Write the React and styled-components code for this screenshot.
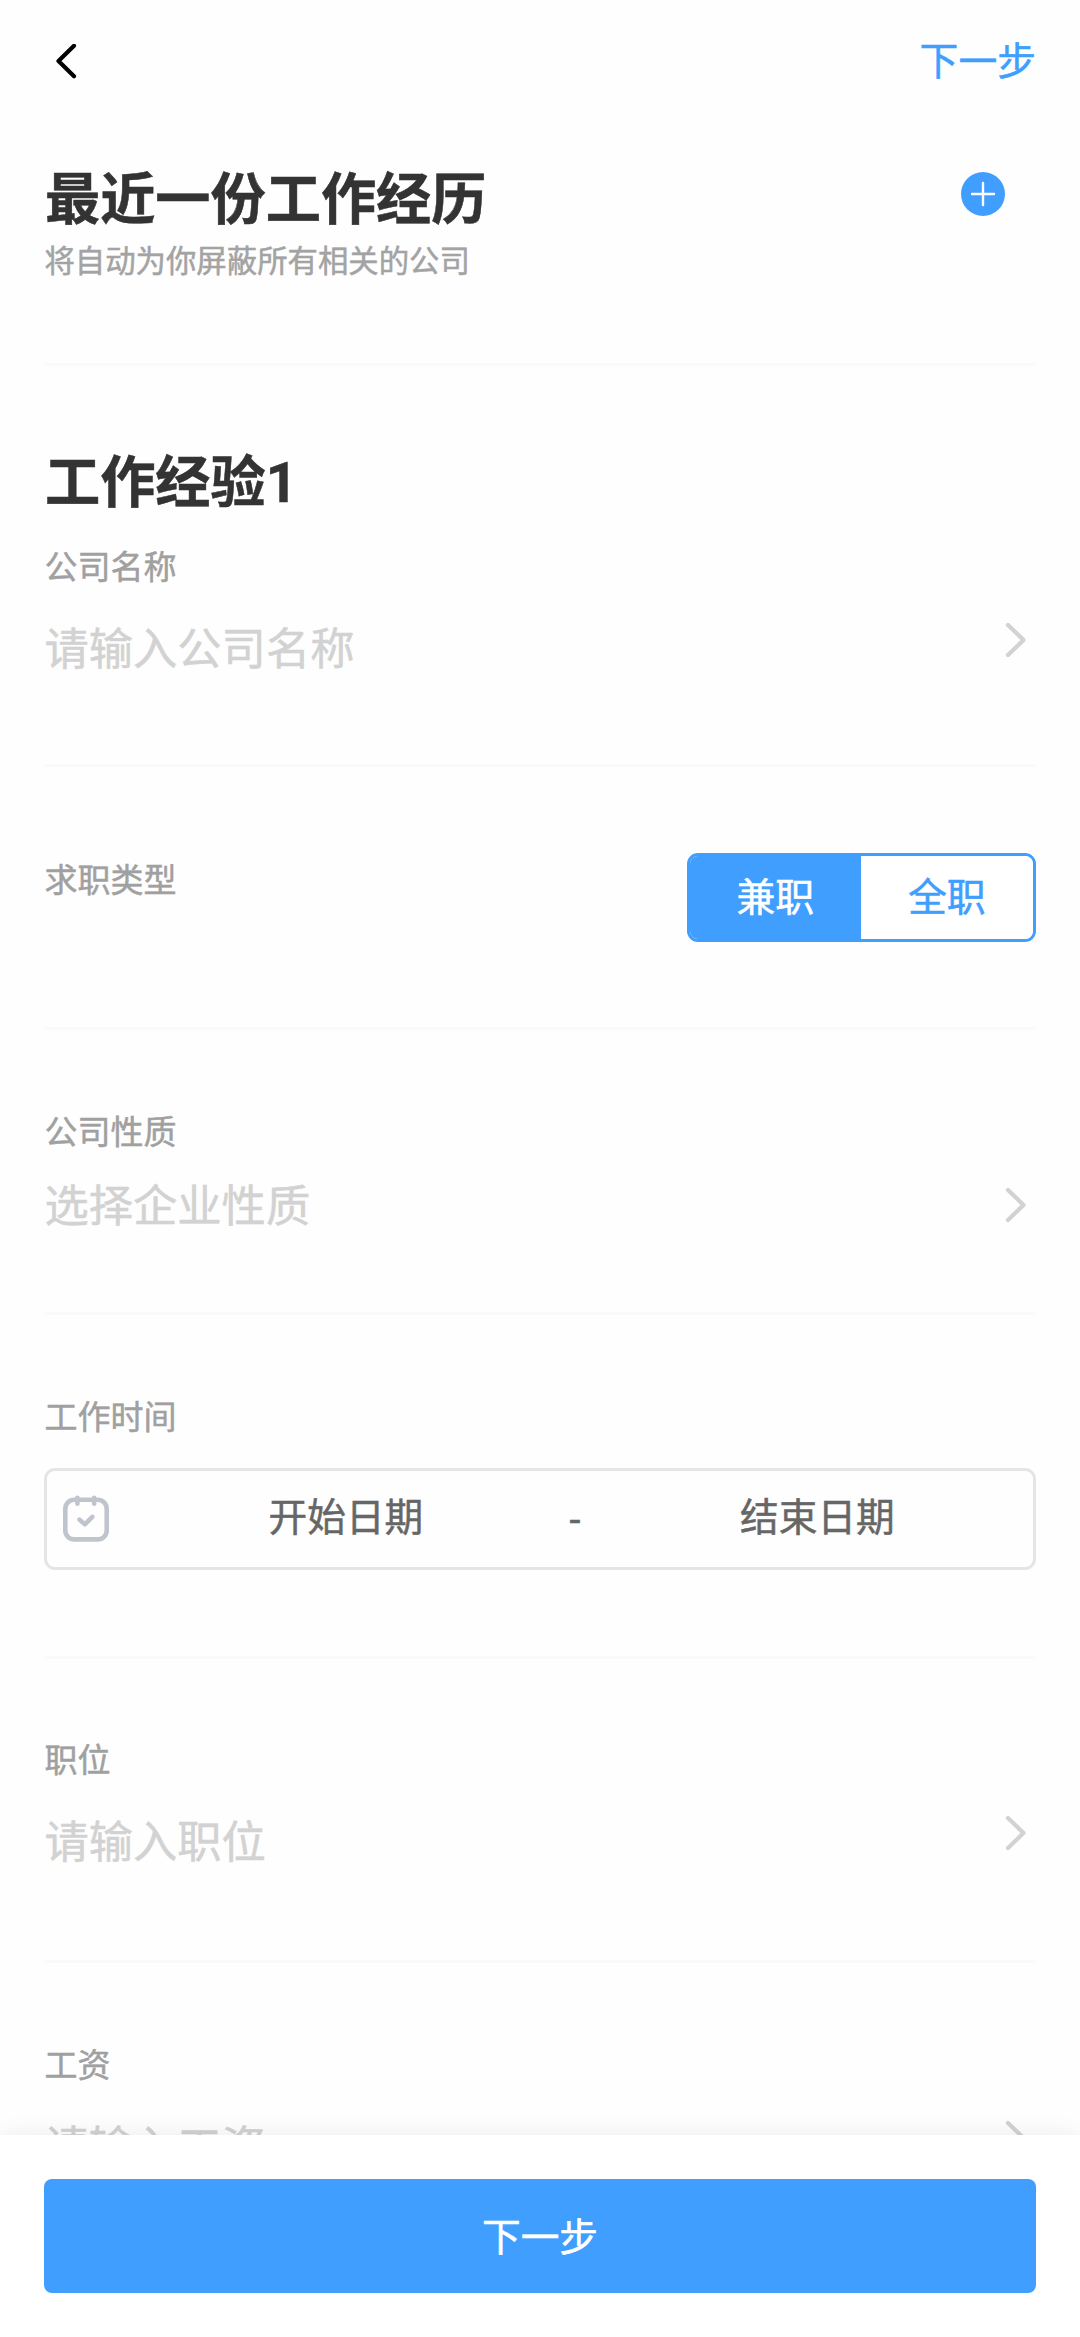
import React from "react";
import styled, { createGlobalStyle } from "styled-components";

const Global = createGlobalStyle`
  * { box-sizing: border-box; }
  html, body { margin: 0; padding: 0; background: #fefefe; }
  body { overflow: hidden; }
  button { border: 0; padding: 0; margin: 0; background: none; font: inherit; color: inherit; }
  h1, h2, p { margin: 0; }
`;

const Screen = styled.div`
  width: 1080px;
  height: 2337px;
  display: flex;
  flex-direction: column;
  background: #fefefe;
  font-family: "Liberation Sans", "Noto Sans CJK SC", sans-serif;
  -webkit-text-stroke: 0.5px currentColor;
`;

const NavBar = styled.header`
  height: 124px;
  flex: none;
  padding: 0 44px 0 54px;
  display: flex;
  align-items: center;
  justify-content: space-between;
`;

const NavAction = styled.button`
  font-size: 38.8px;
  line-height: 54px;
  color: #409eff;
`;

const Form = styled.main`
  flex: 1;
  min-height: 0;
  padding: 0 44.4px;
`;

const Section = styled.section`
  height: ${(p) => p.$height}px;
  padding-top: ${(p) => p.$top}px;
  border-bottom: 3px solid #fafafa;
`;

const Line = styled.div`
  display: flex;
  justify-content: space-between;
  align-items: flex-start;
`;

const Title = styled.h1`
  padding-left: 0.6px;
  font-family: Roboto, "Noto Sans CJK SC", sans-serif;
  font-size: 55.2px;
  line-height: 60px;
  font-weight: 700;
  color: #333;
`;

const Subtitle = styled.p`
  margin-top: 15px;
  font-size: 30.4px;
  line-height: 32px;
  color: #a3a3a3;
`;

const AddButton = styled.button`
  display: flex;
  margin: 2px 30.5px 0 0;
`;

const Label = styled.div`
  margin-top: ${(p) => p.$gap || 0}px;
  font-size: 33px;
  line-height: 40px;
  color: #a0a0a0;
`;

const Picker = styled.div`
  margin-top: ${(p) => p.$gap}px;
  height: 60px;
  display: flex;
  align-items: flex-start;
  justify-content: space-between;
  font-size: 44.3px;
  line-height: 60px;
  color: #d2d2d2;
`;

const ArrowSlot = styled.span`
  display: flex;
  margin: ${(p) => p.$top}px 9px 0 0;
`;

const Segments = styled.div`
  width: 349px;
  height: 89px;
  display: flex;
  border: 3px solid #409eff;
  border-radius: 11px;
  overflow: hidden;
`;

const Segment = styled.button`
  flex: 1;
  font-size: 38.9px;
  line-height: 83px;
  text-align: center;
  color: ${(p) => (p.$active ? "#fff" : "#409eff")};
  background: ${(p) => (p.$active ? "#409eff" : "#fff")};
`;

const DateRange = styled.div`
  margin-top: 30px;
  height: 102px;
  padding: 0 0 0 16px;
  display: flex;
  align-items: center;
  border: 3px solid #e5e5e5;
  border-radius: 11px;
  font-size: 38.7px;
  line-height: 60px;
  color: #666;
`;

const StartDate = styled.span`
  width: 445px;
  margin: 0 0 3px 14px;
  text-align: center;
`;

const EndDate = styled.span`
  flex: 1;
  margin: 0 0 3px 21px;
  text-align: center;
`;

const Footer = styled.footer`
  position: fixed;
  left: 0;
  bottom: 0;
  width: 1080px;
  height: 202px;
  padding: 44px 44.4px 0;
  background: #fff;
  box-shadow: 0 0 22px rgba(0, 0, 0, 0.08);
`;

const Submit = styled.button`
  display: block;
  width: 100%;
  height: 114px;
  border-radius: 8px;
  background: #409eff;
  color: #fff;
  font-size: 38.7px;
  line-height: 118px;
  text-align: center;
`;

const Arrow = () => (
  <svg width="22" height="36" viewBox="0 0 22 36" fill="none" stroke="#d2d2d2" strokeWidth="4.2" strokeLinecap="round" strokeLinejoin="round">
    <path d="M3 3 18.5 18 3 33" />
  </svg>
);

const BackIcon = () => (
  <svg width="24" height="36" viewBox="0 0 24 36" fill="none" stroke="#000" strokeWidth="4.2" strokeLinecap="round" strokeLinejoin="round">
    <path d="M20 1.8 4.5 17 20 32.2" />
  </svg>
);

const PlusIcon = () => (
  <svg width="44" height="44" viewBox="0 0 44 44">
    <circle cx="22" cy="22" r="22" fill="#409eff" />
    <path d="M22 11v22M11 22h22" stroke="#fff" strokeWidth="2.4" strokeLinecap="round" />
  </svg>
);

const CalendarIcon = () => (
  <svg width="46" height="48" viewBox="0 0 46 48" fill="none" stroke="#c0c4cc" strokeWidth="4.6" strokeLinecap="round" strokeLinejoin="round">
    <rect x="2.3" y="4.8" width="41.4" height="39.6" rx="9" />
    <path d="M14.4 2.7v6M31.2 2.7v6M16.5 24.6l5.4 4.8L29.3 21.9" />
  </svg>
);

const Field = ({ label, placeholder, labelGap, gap, arrowTop }) => (
  <>
    <Label $gap={labelGap}>{label}</Label>
    <Picker $gap={gap}>
      <span>{placeholder}</span>
      <ArrowSlot $top={arrowTop}><Arrow /></ArrowSlot>
    </Picker>
  </>
);

export default function App() {
  return (
    <Screen>
      <Global />
      <NavBar>
        <BackIcon />
        <NavAction>下一步</NavAction>
      </NavBar>
      <Form>
        <Section $height={242} $top={46}>
          <Line>
            <div>
              <Title>最近一份工作经历</Title>
              <Subtitle>将自动为你屏蔽所有相关的公司</Subtitle>
            </div>
            <AddButton aria-label="添加"><PlusIcon /></AddButton>
          </Line>
        </Section>
        <Section $height={401} $top={87}>
          <Title as="h2">工作经验1</Title>
          <Field labelGap={35} label="公司名称" placeholder="请输入公司名称" gap={32} arrowTop={2} />
        </Section>
        <Section $height={263} $top={86}>
          <Line>
            <Label $gap={8}>求职类型</Label>
            <Segments>
              <Segment $active>兼职</Segment>
              <Segment>全职</Segment>
            </Segments>
          </Line>
        </Section>
        <Section $height={285} $top={83}>
          <Field label="公司性质" placeholder="选择企业性质" gap={24} arrowTop={10} />
        </Section>
        <Section $height={344} $top={83}>
          <Label>工作时间</Label>
          <DateRange>
            <CalendarIcon />
            <StartDate>开始日期</StartDate>
            <span>-</span>
            <EndDate>结束日期</EndDate>
          </DateRange>
        </Section>
        <Section $height={304} $top={82}>
          <Field label="职位" placeholder="请输入职位" gap={32} arrowTop={2} />
        </Section>
        <Section $height={304} $top={83}>
          <Field label="工资" placeholder="请输入工资" gap={32} arrowTop={2} />
        </Section>
      </Form>
      <Footer>
        <Submit>下一步</Submit>
      </Footer>
    </Screen>
  );
}
